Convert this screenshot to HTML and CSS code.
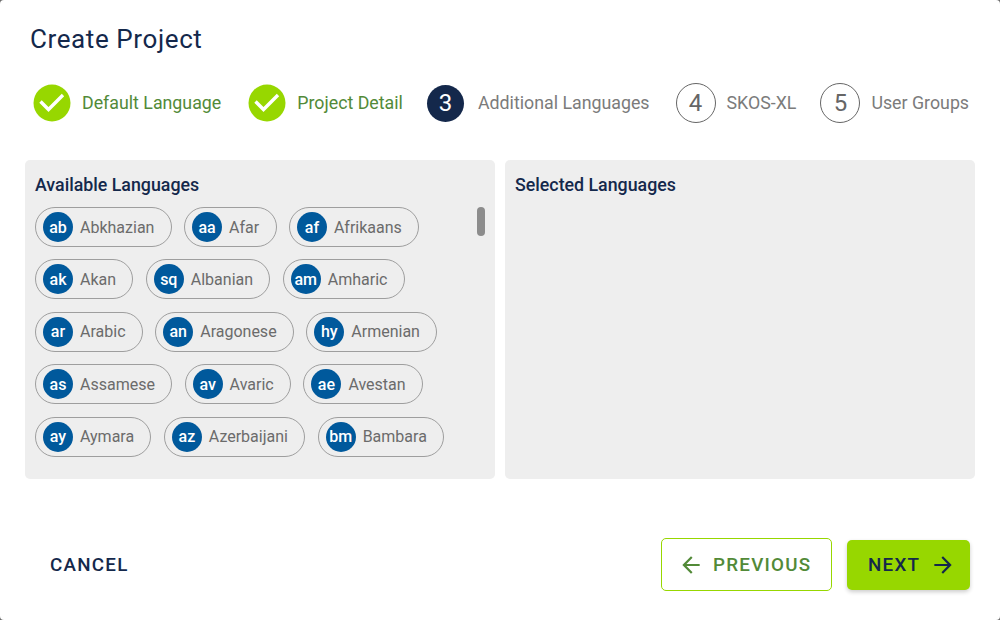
FILE: index.html
```html
<!DOCTYPE html>
<html lang="en">
<head>
    <meta charset="UTF-8">
    <title>Create Project</title>
    <link rel="stylesheet" href="styles.css">
</head>
<body>
    <div class="dialog">
        <h2 class="title">Create Project</h2>

        <!-- Steps -->
        <div class="stepper">
            <div class="step step-done">
                <svg class="step-check" width="38" height="38" viewBox="0 0 38 38"><circle cx="19" cy="19" r="18.5" fill="#97d700"/><path d="M7.5 17.5l8 8L30 11" fill="none" stroke="#fff" stroke-width="3.4"/></svg>
                <span>Default Language</span>
            </div>
            <div class="step step-done">
                <svg class="step-check" width="38" height="38" viewBox="0 0 38 38"><circle cx="19" cy="19" r="18.5" fill="#97d700"/><path d="M7.5 17.5l8 8L30 11" fill="none" stroke="#fff" stroke-width="3.4"/></svg>
                <span>Project Detail</span>
            </div>
            <div class="step step-active">
                <div class="step-num">3</div>
                <span>Additional Languages</span>
            </div>
            <div class="step">
                <div class="step-num">4</div>
                <span>SKOS-XL</span>
            </div>
            <div class="step">
                <div class="step-num">5</div>
                <span>User Groups</span>
            </div>
        </div>

        <!-- Language lists -->
        <div class="panels">
            <div class="panel panel-available">
                <div class="panel-title">Available Languages</div>
                <div class="chips">
                    <div class="chip-row">
                        <div class="chip"><b>ab</b>Abkhazian</div>
                        <div class="chip"><b>aa</b>Afar</div>
                        <div class="chip"><b>af</b>Afrikaans</div>
                    </div>
                    <div class="chip-row">
                        <div class="chip"><b>ak</b>Akan</div>
                        <div class="chip"><b>sq</b>Albanian</div>
                        <div class="chip"><b>am</b>Amharic</div>
                    </div>
                    <div class="chip-row">
                        <div class="chip"><b>ar</b>Arabic</div>
                        <div class="chip"><b>an</b>Aragonese</div>
                        <div class="chip"><b>hy</b>Armenian</div>
                    </div>
                    <div class="chip-row">
                        <div class="chip"><b>as</b>Assamese</div>
                        <div class="chip"><b>av</b>Avaric</div>
                        <div class="chip"><b>ae</b>Avestan</div>
                    </div>
                    <div class="chip-row">
                        <div class="chip"><b>ay</b>Aymara</div>
                        <div class="chip"><b>az</b>Azerbaijani</div>
                        <div class="chip"><b>bm</b>Bambara</div>
                    </div>
                </div>
                <div class="scroll-thumb"></div>
            </div>
            <div class="panel">
                <div class="panel-title">Selected Languages</div>
            </div>
        </div>

        <!-- Actions -->
        <div class="actions">
            <button class="btn btn-cancel">CANCEL</button>
            <div class="actions-right">
                <button class="btn btn-prev">
                    <svg width="26" height="26" viewBox="0 0 24 24"><path d="M20 11H7.83l5.59-5.59L12 4l-8 8 8 8 1.41-1.41L7.83 13H20z" fill="#528a38"/></svg>
                    PREVIOUS
                </button>
                <button class="btn btn-next">
                    NEXT
                    <svg width="26" height="26" viewBox="0 0 24 24"><path d="M12 4l-1.41 1.41L16.17 11H4v2h12.17l-5.58 5.59L12 20l8-8z" fill="#14284b"/></svg>
                </button>
            </div>
        </div>
    </div>
</body>
</html>
```

FILE: styles.css
```css
* {
    box-sizing: border-box;
}

html, body {
    height: 100%;
}

body {
    margin: 0;
    background: #6b6b6b;
    font-family: Roboto, "Liberation Sans", sans-serif;
}

.dialog {
    width: 1000px;
    height: 620px;
    background: #fff;
    border-radius: 4px;
    padding: 20px 25px 0;
    overflow: hidden;
}

.title {
    margin: 0 0 0 5px;
    height: 38px;
    line-height: 38px;
    font-size: 26px;
    font-weight: 400;
    letter-spacing: 0.6px;
    color: #14284b;
}

.stepper {
    display: flex;
    align-items: center;
    margin-top: 25px;
    padding-left: 8px;
    height: 40px;
}

.step {
    display: flex;
    align-items: center;
    flex-shrink: 0;
    white-space: nowrap;
    margin-right: 24px;
    color: #7b7b7b;
    font-size: 17.8px;
}

.step:first-child {
    margin-right: 27px;
}

.step:last-child {
    margin-right: 0;
}

.step span {
    margin-left: 11px;
    margin-bottom: 2px;
}

.step-done {
    color: #528a38;
}

.step-check {
    display: block;
}

.step-num {
    width: 40px;
    height: 40px;
    border: 1px solid #666;
    border-radius: 50%;
    display: flex;
    align-items: center;
    justify-content: center;
    font-size: 24px;
    color: #666;
}

.step-active {
    margin-right: 26px;
}

.step-active .step-num {
    width: 37px;
    height: 37px;
    background: #14284b;
    border: 0;
    color: #fff;
}

.step-active span {
    margin-left: 14px;
}

.panels {
    display: flex;
    gap: 10px;
    margin-top: 37px;
}

.panel {
    position: relative;
    width: 470px;
    height: 319px;
    background: #eee;
    border-radius: 5px;
    padding: 15px 10px 0;
}

.panel-title {
    font-size: 17.8px;
    font-weight: 500;
    line-height: 20px;
    color: #14284b;
}

.chips {
    display: flex;
    flex-direction: column;
    gap: 12.4px;
    margin-top: 12px;
}

.chip-row {
    display: flex;
    gap: 12.4px;
}

.chip {
    display: flex;
    align-items: center;
    height: 40px;
    padding: 0 16.3px 0 7px;
    border: 1px solid #9e9e9e;
    border-radius: 20px;
    font-size: 16px;
    color: #6b6b6b;
}

.chip b {
    width: 30px;
    height: 30px;
    margin-right: 7px;
    border-radius: 50%;
    background: #00599c;
    color: #fff;
    font-size: 16px;
    font-weight: 500;
    display: flex;
    align-items: center;
    justify-content: center;
}

.scroll-thumb {
    position: absolute;
    top: 47px;
    right: 10px;
    width: 8px;
    height: 29px;
    border-radius: 4px;
    background: #8c8c8c;
}

.actions {
    display: flex;
    justify-content: space-between;
    align-items: center;
    margin-top: 59px;
}

.actions-right {
    display: flex;
    align-items: center;
    gap: 15px;
    margin-right: 5px;
}

.btn {
    display: flex;
    align-items: center;
    font-family: inherit;
    font-size: 18.8px;
    font-weight: 500;
    letter-spacing: 1.25px;
    border: 0;
    background: none;
    padding: 0;
}

.btn-cancel {
    margin-left: 25px;
    color: #14284b;
}

.btn-prev {
    width: 171px;
    height: 53px;
    padding-left: 16px;
    gap: 9px;
    border: 1px solid #97d700;
    border-radius: 5px;
    color: #528a38;
}

.btn-next {
    width: 123px;
    height: 50px;
    padding-left: 21px;
    gap: 10px;
    border-radius: 5px;
    background: #97d700;
    color: #14284b;
    box-shadow: 0 2px 4px rgba(0, 0, 0, 0.2);
}
```
